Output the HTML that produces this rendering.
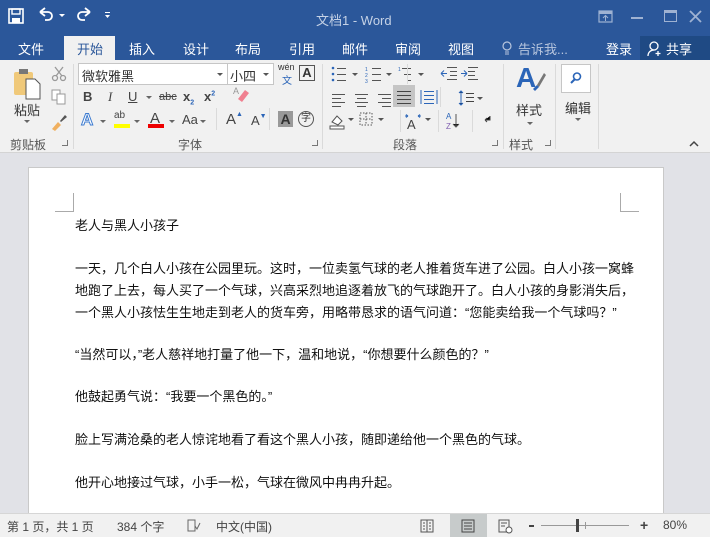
<!DOCTYPE html>
<html><head><meta charset="utf-8"><style>
*{margin:0;padding:0;box-sizing:border-box}
body{width:710px;height:537px;overflow:hidden;font-family:"Liberation Sans","Noto Sans CJK SC",sans-serif;background:#e1e2e7;position:relative;font-size:12px;color:#444}
.a{position:absolute}
#title{left:0;top:0;width:710px;height:35px;background:#2b579a}
#tabs{left:0;top:35px;width:710px;height:25px;background:#2b579a}
.tab{position:absolute;top:4px;color:#fff;font-size:13px}
#ribbon{left:0;top:60px;width:710px;height:93px;background:#f1f1f1;border-bottom:1px solid #d4d4d4}
.sep{position:absolute;top:4px;width:1px;height:85px;background:#dadada}
.gl{position:absolute;top:76px;font-size:12px;color:#555}
.ic{position:absolute;color:#444}
#status{left:0;top:513px;width:710px;height:24px;background:#f1f1f1;border-top:1px solid #d6d6d6;color:#444;font-size:12px}
#page{left:28px;top:167px;width:636px;height:346px;background:#fff;border:1px solid #c9c9c9;border-bottom:none}
.t{position:absolute;left:46px;width:548px;font-size:13px;color:#111;line-height:22px;white-space:nowrap}
.j{text-align:justify;text-align-last:justify}
</style></head><body>
<div id="title" class="a">
 <svg class="a" style="left:8px;top:8px" width="16" height="16"><rect x="1" y="1" width="14" height="14" fill="none" stroke="#fff" stroke-width="1.6"/><rect x="4" y="1" width="8" height="5" fill="none" stroke="#fff" stroke-width="1.4"/><rect x="4" y="10" width="8" height="5" fill="#fff"/></svg>
 <svg class="a" style="left:37px;top:7px" width="30" height="16"><path d="M3 5 L8 1 M3 5 L8 9 M3 5 H11 a4 4 0 0 1 0 8 H8" fill="none" stroke="#fff" stroke-width="1.8"/><path d="M22 7 l3 3 l3 -3z" fill="#fff"/></svg>
 <svg class="a" style="left:77px;top:7px" width="16" height="16"><path d="M13 5 L8 1 M13 5 L8 9 M13 5 H5 a4 4 0 0 0 0 8 H8" fill="none" stroke="#fff" stroke-width="1.8"/></svg>
 <svg class="a" style="left:104px;top:11px" width="8" height="8"><rect x="1" y="1" width="5" height="1" fill="#fff"/><path d="M1 4 h5 l-2.5 3z" fill="#fff"/></svg>
 <div class="a" style="left:316px;top:10px;color:#c5d2e6;font-size:13px">文档1 - Word</div>
 <svg class="a" style="left:598px;top:10px" width="16" height="14"><rect x="1" y="1" width="13" height="11" fill="none" stroke="#9fb2d2" stroke-width="1.2"/><rect x="1" y="1" width="13" height="3" fill="#9fb2d2"/><path d="M7.5 11V6 M5 8l2.5-2.5L10 8" stroke="#9fb2d2" fill="none"/></svg>
 <div class="a" style="left:631px;top:17px;width:12px;height:2px;background:#9fb2d2"></div>
 <div class="a" style="left:664px;top:10px;width:13px;height:12px;border:1.5px solid #9fb2d2;border-top-width:3px"></div>
 <svg class="a" style="left:689px;top:10px" width="13" height="13"><path d="M1 1L12 12M12 1L1 12" stroke="#9fb2d2" stroke-width="1.8"/></svg>
</div>
<div id="tabs" class="a">
 <span class="tab" style="left:18px">文件</span>
 <div class="a" style="left:64px;top:1px;width:51px;height:25px;background:#f1f1f1"></div>
 <span class="tab" style="left:77px;color:#2b579a">开始</span>
 <span class="tab" style="left:129px">插入</span>
 <span class="tab" style="left:183px">设计</span>
 <span class="tab" style="left:235px">布局</span>
 <span class="tab" style="left:289px">引用</span>
 <span class="tab" style="left:342px">邮件</span>
 <span class="tab" style="left:395px">审阅</span>
 <span class="tab" style="left:448px">视图</span>
 <svg class="a" style="left:502px;top:5px" width="10" height="16"><circle cx="5" cy="6" r="4" fill="none" stroke="#b8c6de" stroke-width="1.2"/><path d="M3 12h4M3 14h4" stroke="#b8c6de"/></svg>
 <span class="tab" style="left:518px;color:#b8c6de">告诉我...</span>
 <span class="tab" style="left:606px">登录</span>
 <div class="a" style="left:640px;top:1px;width:70px;height:24px;background:#1f4a84"></div>
 <svg class="a" style="left:647px;top:6px" width="16" height="16"><circle cx="7" cy="5" r="4" fill="none" stroke="#fff" stroke-width="1.3"/><path d="M1 15c0-4 3-6 6-6" fill="none" stroke="#fff" stroke-width="1.3"/><path d="M11 10v5M8.5 12.5h5" stroke="#fff" stroke-width="1.3"/></svg>
 <span class="tab" style="left:666px">共享</span>
</div>
<div id="ribbon" class="a">
 <svg class="a" style="left:13px;top:7px" width="30" height="33"><rect x="1" y="5" width="19" height="23" rx="2" fill="#f0c97a"/><rect x="6" y="2" width="9" height="5" fill="#777"/><path d="M13 12h9l5 5v15h-14z" fill="#fff" stroke="#555"/></svg>
 <div class="a" style="left:14px;top:40px;font-size:13px;color:#333">粘贴</div>
 <div class="a" style="left:24px;top:60px;border:3px solid transparent;border-top:3px solid #666"></div>
 <svg class="a" style="left:51px;top:6px" width="16" height="16"><circle cx="4" cy="12" r="2.5" fill="none" stroke="#999" stroke-width="1.3"/><circle cx="12" cy="12" r="2.5" fill="none" stroke="#999" stroke-width="1.3"/><path d="M5 10L12 1M11 10L4 1" stroke="#999" stroke-width="1.3"/></svg>
 <svg class="a" style="left:51px;top:29px" width="16" height="16"><rect x="1" y="1" width="8" height="10" fill="#fff" stroke="#999"/><rect x="6" y="5" width="8" height="10" fill="#fff" stroke="#999"/></svg>
 <svg class="a" style="left:50px;top:53px" width="18" height="18"><path d="M2 16l6-7 3 3-6 6z" fill="#f0b060"/><path d="M10 8l5-6 2 2-6 5z" fill="#555"/></svg>
 <div class="gl" style="left:10px">剪贴板</div>
 <div class="ic" style="left:62px;top:80px;width:6px;height:6px;border-right:1px solid #777;border-bottom:1px solid #777"></div>
 <div class="sep" style="left:73px"></div>
 <div class="a" style="left:78px;top:3px;width:150px;height:22px;background:#fff;border:1px solid #c6c6c6;font-size:13px;color:#333;padding:2px 3px">微软雅黑<span style="position:absolute;right:4px;top:9px;border:3px solid transparent;border-top:3px solid #555"></span></div>
 <div class="a" style="left:227px;top:3px;width:47px;height:22px;background:#fff;border:1px solid #c6c6c6;font-size:13px;color:#333;padding:2px 2px">小四<span style="position:absolute;right:4px;top:9px;border:3px solid transparent;border-top:3px solid #555"></span></div>
 <div class="a" style="left:278px;top:2px;font-size:9px;color:#333">wén</div>
 <div class="a" style="left:282px;top:12px;font-size:10px;color:#2b65b8">文</div>
 <div class="a" style="left:299px;top:5px;width:16px;height:16px;border:1.5px solid #555;font-size:13px;font-weight:bold;text-align:center;line-height:14px;color:#333">A</div>
 <div class="a" style="left:83px;top:29px;font-weight:bold;font-size:13px;color:#444">B</div>
 <div class="a" style="left:108px;top:29px;font-style:italic;font-size:13px;font-family:'Liberation Serif';color:#444">I</div>
 <div class="a" style="left:128px;top:29px;text-decoration:underline;font-size:13px;color:#444">U</div>
 <div class="a" style="left:146px;top:36px;border:3px solid transparent;border-top:3px solid #666"></div>
 <div class="a" style="left:159px;top:31px;text-decoration:line-through;font-size:11px;color:#444">abc</div>
 <div class="a" style="left:183px;top:29px;font-weight:bold;font-size:13px;color:#444">x<sub style="font-size:7px;color:#2b65b8">2</sub></div>
 <div class="a" style="left:204px;top:29px;font-weight:bold;font-size:13px;color:#444">x<sup style="font-size:7px;color:#2b65b8">2</sup></div>
 <svg class="a" style="left:232px;top:25px" width="18" height="18"><path d="M6 14l7-9 4 3-7 9z" fill="#f08090"/><text x="1" y="9" font-size="9" fill="#999" font-family="Liberation Sans">A</text></svg>
 <div class="a" style="left:81px;top:50px;font-size:17px;color:#fff;-webkit-text-stroke:1px #3d7bd0;font-weight:bold">A</div>
 <div class="a" style="left:100px;top:60px;border:3px solid transparent;border-top:3px solid #666"></div>
 <div class="a" style="left:114px;top:50px;font-size:10px;color:#444">ab</div>
 <div class="a" style="left:114px;top:64px;width:16px;height:4px;background:#ffff00"></div>
 <div class="a" style="left:134px;top:60px;border:3px solid transparent;border-top:3px solid #666"></div>
 <div class="a" style="left:150px;top:50px;font-size:15px;color:#444">A</div>
 <div class="a" style="left:148px;top:64px;width:16px;height:4px;background:#e00"></div>
 <div class="a" style="left:169px;top:60px;border:3px solid transparent;border-top:3px solid #666"></div>
 <div class="a" style="left:182px;top:52px;font-size:13px;color:#444">Aa</div>
 <div class="a" style="left:200px;top:60px;border:3px solid transparent;border-top:3px solid #666"></div>
 <div class="a" style="left:216px;top:48px;width:1px;height:22px;background:#dadada"></div>
 <div class="a" style="left:226px;top:51px;font-size:15px;color:#444">A<span style="font-size:7px;color:#2b65b8;vertical-align:top">▲</span></div>
 <div class="a" style="left:251px;top:53px;font-size:13px;color:#444">A<span style="font-size:7px;color:#2b65b8;vertical-align:top">▼</span></div>
 <div class="a" style="left:269px;top:48px;width:1px;height:22px;background:#dadada"></div>
 <div class="a" style="left:278px;top:51px;width:15px;height:16px;background:#999;color:#333;font-weight:bold;font-size:14px;text-align:center;line-height:16px">A</div>
 <div class="a" style="left:298px;top:51px;width:16px;height:16px;border:1.2px solid #555;border-radius:50%;font-size:10px;text-align:center;line-height:14px;color:#333">字</div>
 <div class="gl" style="left:178px">字体</div>
 <div class="ic" style="left:312px;top:80px;width:6px;height:6px;border-right:1px solid #777;border-bottom:1px solid #777"></div>
 <div class="sep" style="left:322px"></div>
 <svg class="a" style="left:330px;top:5px" width="160" height="70" stroke="#555" fill="#555">
  <g stroke-width="1"><circle cx="3" cy="3" r="1.3" fill="#2b65b8" stroke="none"/><circle cx="3" cy="9" r="1.3" fill="#2b65b8" stroke="none"/><circle cx="3" cy="15" r="1.3" fill="#2b65b8" stroke="none"/><path d="M7 3.5h9M7 9.5h9M7 15.5h9"/>
  <path d="M22 8l3 3 3-3z" stroke="none"/>
  <path d="M42 3.5h9M42 9.5h9M42 15.5h9"/><text x="35" y="6" font-size="5" fill="#2b65b8" stroke="none">1</text><text x="35" y="12" font-size="5" fill="#2b65b8" stroke="none">2</text><text x="35" y="18" font-size="5" fill="#2b65b8" stroke="none">3</text>
  <path d="M56 8l3 3 3-3z" stroke="none"/>
  <path d="M72 3.5h9M74 9.5h7M77 15.5h4"/><text x="68" y="6" font-size="5" fill="#2b65b8" stroke="none">1</text>
  <path d="M88 8l3 3 3-3z" stroke="none"/>
  <path d="M117 2.5h10M120 6.5h7M120 10.5h7M117 14.5h10"/><path d="M111 8.5h6M111 8.5l3-3M111 8.5l3 3" stroke="#2b65b8"/>
  <path d="M138 2.5h10M138 6.5h7M138 10.5h7M138 14.5h10"/><path d="M131 8.5h6M137 8.5l-3-3M137 8.5l-3 3" stroke="#2b65b8"/>
  <path d="M2 29.5h13M2 33.5h9M2 37.5h13M2 41.5h9"/>
  <path d="M25 29.5h13M27 33.5h9M25 37.5h13M27 41.5h9"/>
  <path d="M48 29.5h13M52 33.5h9M48 37.5h13M52 41.5h9"/>
  </g></svg>
 <div class="a" style="left:393px;top:25px;width:22px;height:22px;background:#c5c5c5"></div>
 <svg class="a" style="left:393px;top:25px" width="100" height="50" stroke="#444"><path d="M4 6.5h14M4 10.5h14M4 14.5h14M4 18.5h14"/><path d="M28 5v14M44 5v14M31 6.5h10M31 10.5h10M31 14.5h10M31 18.5h10" stroke="#2b65b8"/><path d="M68 6v14M66 8l2-2 2 2M66 18l2 2 2-2" stroke="#2b65b8"/><path d="M73 8.5h8M73 12.5h8M73 16.5h8"/><path d="M84 12l3 3 3-3z" fill="#555" stroke="none"/></svg>
 <svg class="a" style="left:329px;top:50px" width="170" height="22" stroke="#555"><path d="M3 12l5-6 5 5-4 4z" fill="#fff"/><rect x="1" y="16" width="14" height="3" fill="#fff"/><path d="M19 8l3 3 3-3z" fill="#555" stroke="none"/><rect x="31" y="3" width="12" height="12" fill="none" stroke-dasharray="1.5 1.5"/><path d="M31 9h12M37 3v12" stroke-dasharray="1.5 1.5"/><path d="M49 8l3 3 3-3z" fill="#555" stroke="none"/>
 <path d="M79 6h-3M79 6l-2-1.5M79 6l-2 1.5M89 6h3M89 6l2-1.5M89 6l2 1.5" stroke="#2b65b8"/><text x="78" y="19" font-size="13" fill="#444" stroke="none" font-family="Liberation Sans">A</text><path d="M96 8l3 3 3-3z" fill="#555" stroke="none"/>
 <text x="117" y="9" font-size="8" fill="#2b65b8" stroke="none" font-family="Liberation Sans">A</text><text x="117" y="19" font-size="8" fill="#8060b0" stroke="none" font-family="Liberation Sans">Z</text><path d="M127 4v13M124 14l3 3 3-3"/><path d="M161 6v4h-5M156 10l2-2M156 10l2 2" stroke="#444"/></svg>
 <div class="a" style="left:400px;top:50px;width:1px;height:22px;background:#dadada"></div>
 <div class="a" style="left:438px;top:50px;width:1px;height:22px;background:#dadada"></div>
 <div class="a" style="left:407px;top:4px;width:1px;height:20px;background:#dadada"></div>
 <div class="a" style="left:440px;top:27px;width:1px;height:20px;background:#dadada"></div>
 <div class="a" style="left:472px;top:50px;width:1px;height:22px;background:#dadada"></div>
 <div class="gl" style="left:393px">段落</div>
 <div class="ic" style="left:492px;top:80px;width:6px;height:6px;border-right:1px solid #777;border-bottom:1px solid #777"></div>
 <div class="sep" style="left:503px"></div>
 <div class="a" style="left:516px;top:2px;font-size:28px;font-weight:bold;color:#2b65b8;font-family:'Liberation Sans'">A</div>
 <svg class="a" style="left:530px;top:12px" width="16" height="22"><path d="M14 1l-7 12 2 2 7-12z" fill="#777"/><path d="M3 17l4-4 2 2-4 4z" fill="#2b65b8"/></svg>
 <div class="a" style="left:516px;top:40px;font-size:13px;color:#333">样式</div>
 <div class="a" style="left:527px;top:62px;border:3px solid transparent;border-top:3px solid #666"></div>
 <div class="gl" style="left:509px">样式</div>
 <div class="ic" style="left:545px;top:80px;width:6px;height:6px;border-right:1px solid #777;border-bottom:1px solid #777"></div>
 <div class="sep" style="left:555px"></div>
 <div class="a" style="left:561px;top:4px;width:30px;height:29px;background:#fff;border:1px solid #c6c6c6"></div>
 <svg class="a" style="left:569px;top:11px" width="14" height="14"><circle cx="8" cy="5.5" r="3.5" fill="none" stroke="#2b65b8" stroke-width="1.6"/><path d="M6 8l-4 4" stroke="#2b65b8" stroke-width="2"/></svg>
 <div class="a" style="left:565px;top:38px;font-size:13px;color:#333">编辑</div>
 <div class="a" style="left:575px;top:58px;border:3px solid transparent;border-top:3px solid #666"></div>
 <div class="sep" style="left:598px"></div>
 <svg class="a" style="left:689px;top:80px" width="10" height="7"><path d="M1 6l4-4 4 4" fill="none" stroke="#444" stroke-width="1.5"/></svg>
</div>
<div id="page" class="a">
 <div class="a" style="left:26px;top:25px;width:19px;height:19px;border-right:1px solid #aaa;border-bottom:1px solid #aaa"></div>
 <div class="a" style="left:591px;top:25px;width:19px;height:19px;border-left:1px solid #aaa;border-bottom:1px solid #aaa"></div>
 <div class="t" style="top:47px">老人与黑人小孩子</div>
 <div class="t j" style="top:90px">一天，几个白人小孩在公园里玩。这时，一位卖氢气球的老人推着货车进了公园。白人小孩一窝蜂</div>
 <div class="t j" style="top:112px">地跑了上去，每人买了一个气球，兴高采烈地追逐着放飞的气球跑开了。白人小孩的身影消失后，</div>
 <div class="t" style="top:134px">一个黑人小孩怯生生地走到老人的货车旁，用略带恳求的语气问道：“您能卖给我一个气球吗？”</div>
 <div class="t" style="top:176px">“当然可以，”老人慈祥地打量了他一下，温和地说，“你想要什么颜色的？”</div>
 <div class="t" style="top:218px">他鼓起勇气说：“我要一个黑色的。”</div>
 <div class="t" style="top:261px">脸上写满沧桑的老人惊诧地看了看这个黑人小孩，随即递给他一个黑色的气球。</div>
 <div class="t" style="top:304px">他开心地接过气球，小手一松，气球在微风中冉冉升起。</div>
</div>
<div id="status" class="a">
 <div class="a" style="left:7px;top:4px">第 1 页，共 1 页</div>
 <div class="a" style="left:117px;top:4px">384 个字</div>
 <svg class="a" style="left:187px;top:5px" width="14" height="14"><rect x="1" y="1" width="7" height="11" fill="none" stroke="#666"/><path d="M8 7l2 3 3-6" fill="none" stroke="#666"/></svg>
 <div class="a" style="left:216px;top:4px">中文(中国)</div>
 <svg class="a" style="left:420px;top:5px" width="14" height="14" stroke="#555"><rect x="1" y="1" width="12" height="12" fill="none"/><path d="M7 1v12M3 4h2M3 7h2M3 10h2M9 4h2M9 7h2M9 10h2"/></svg>
 <div class="a" style="left:450px;top:0;width:37px;height:23px;background:#c7cbcb"></div>
 <svg class="a" style="left:461px;top:5px" width="14" height="14" stroke="#444"><rect x="1" y="1" width="12" height="12" fill="none"/><path d="M3 4h8M3 7h8M3 10h8"/></svg>
 <svg class="a" style="left:498px;top:5px" width="16" height="15" stroke="#555"><path d="M1 1h10v12H1z" fill="none"/><path d="M3 4h6M3 7h4"/><circle cx="11" cy="11" r="3" fill="#fff"/></svg>
 <div class="a" style="left:529px;top:11px;width:5px;height:2px;background:#444"></div>
 <div class="a" style="left:541px;top:11px;width:88px;height:1px;background:#999"></div>
 <div class="a" style="left:576px;top:5px;width:3px;height:13px;background:#444"></div>
 <div class="a" style="left:585px;top:8px;width:1px;height:7px;background:#999"></div>
 <div class="a" style="left:640px;top:3px;font-size:14px;font-weight:bold;color:#444">+</div>
 <div class="a" style="left:663px;top:4px">80%</div>
</div>
</body></html>
